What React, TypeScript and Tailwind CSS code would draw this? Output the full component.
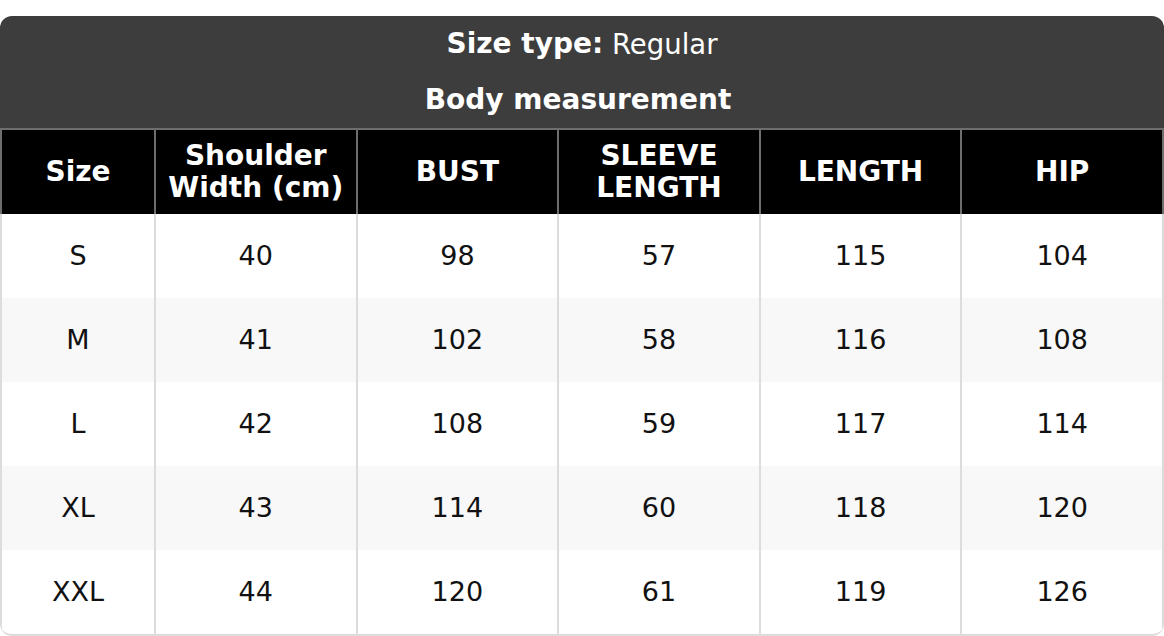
import React from "react";

const headers: string[][] = [
  ["Size"],
  ["Shoulder", "Width (cm)"],
  ["BUST"],
  ["SLEEVE", "LENGTH"],
  ["LENGTH"],
  ["HIP"],
];

const rows: string[][] = [
  ["S", "40", "98", "57", "115", "104"],
  ["M", "41", "102", "58", "116", "108"],
  ["L", "42", "108", "59", "117", "114"],
  ["XL", "43", "114", "60", "118", "120"],
  ["XXL", "44", "120", "61", "119", "126"],
];

export default function App() {
  return (
    <div
      className="w-[1164px] h-[636px] bg-white pt-[16px]"
      style={{ fontFamily: '"DejaVu Sans", Verdana, sans-serif' }}
    >
      <div className="rounded-[12px] overflow-hidden border-b-2 border-[#dcdcdc]">
        <div className="bg-[#3d3d3d] text-white text-[27px] leading-[1.2] text-center">
          <div className="h-[56px] flex items-center justify-center">
            <span className="font-bold text-[28px]">Size type:</span>
            <span className="text-[27.5px]">&nbsp;Regular</span>
          </div>
          <div className="h-[56px] flex items-center justify-center font-bold text-[28px] pr-[8px]">
            Body measurement
          </div>
        </div>
        <div className="grid grid-cols-[152px_repeat(5,1fr)] h-[86px] bg-black border-t-2 border-x-2 border-[#6e6e6e] text-white font-bold text-[28px] leading-[1.15]">
          {headers.map((h, i) => (
            <div
              key={i}
              className={`flex flex-col items-center justify-center text-center ${
                i > 0 ? "border-l-2 border-[#6e6e6e]" : ""
              }`}
            >
              {h.map((l, j) => (
                <div key={j}>{l}</div>
              ))}
            </div>
          ))}
        </div>
        {rows.map((r, ri) => (
          <div
            key={ri}
            className={`grid grid-cols-[152px_repeat(5,1fr)] h-[84px] border-x-2 border-[#dcdcdc] text-[27px] leading-[1.2] text-[#111] ${
              ri % 2 === 1 ? "bg-[#f8f8f8]" : "bg-white"
            }`}
          >
            {r.map((c, ci) => (
              <div
                key={ci}
                className={`flex items-center justify-center ${
                  ci > 0 ? "border-l-2 border-[#dcdcdc]" : ""
                }`}
              >
                {c}
              </div>
            ))}
          </div>
        ))}
      </div>
    </div>
  );
}
